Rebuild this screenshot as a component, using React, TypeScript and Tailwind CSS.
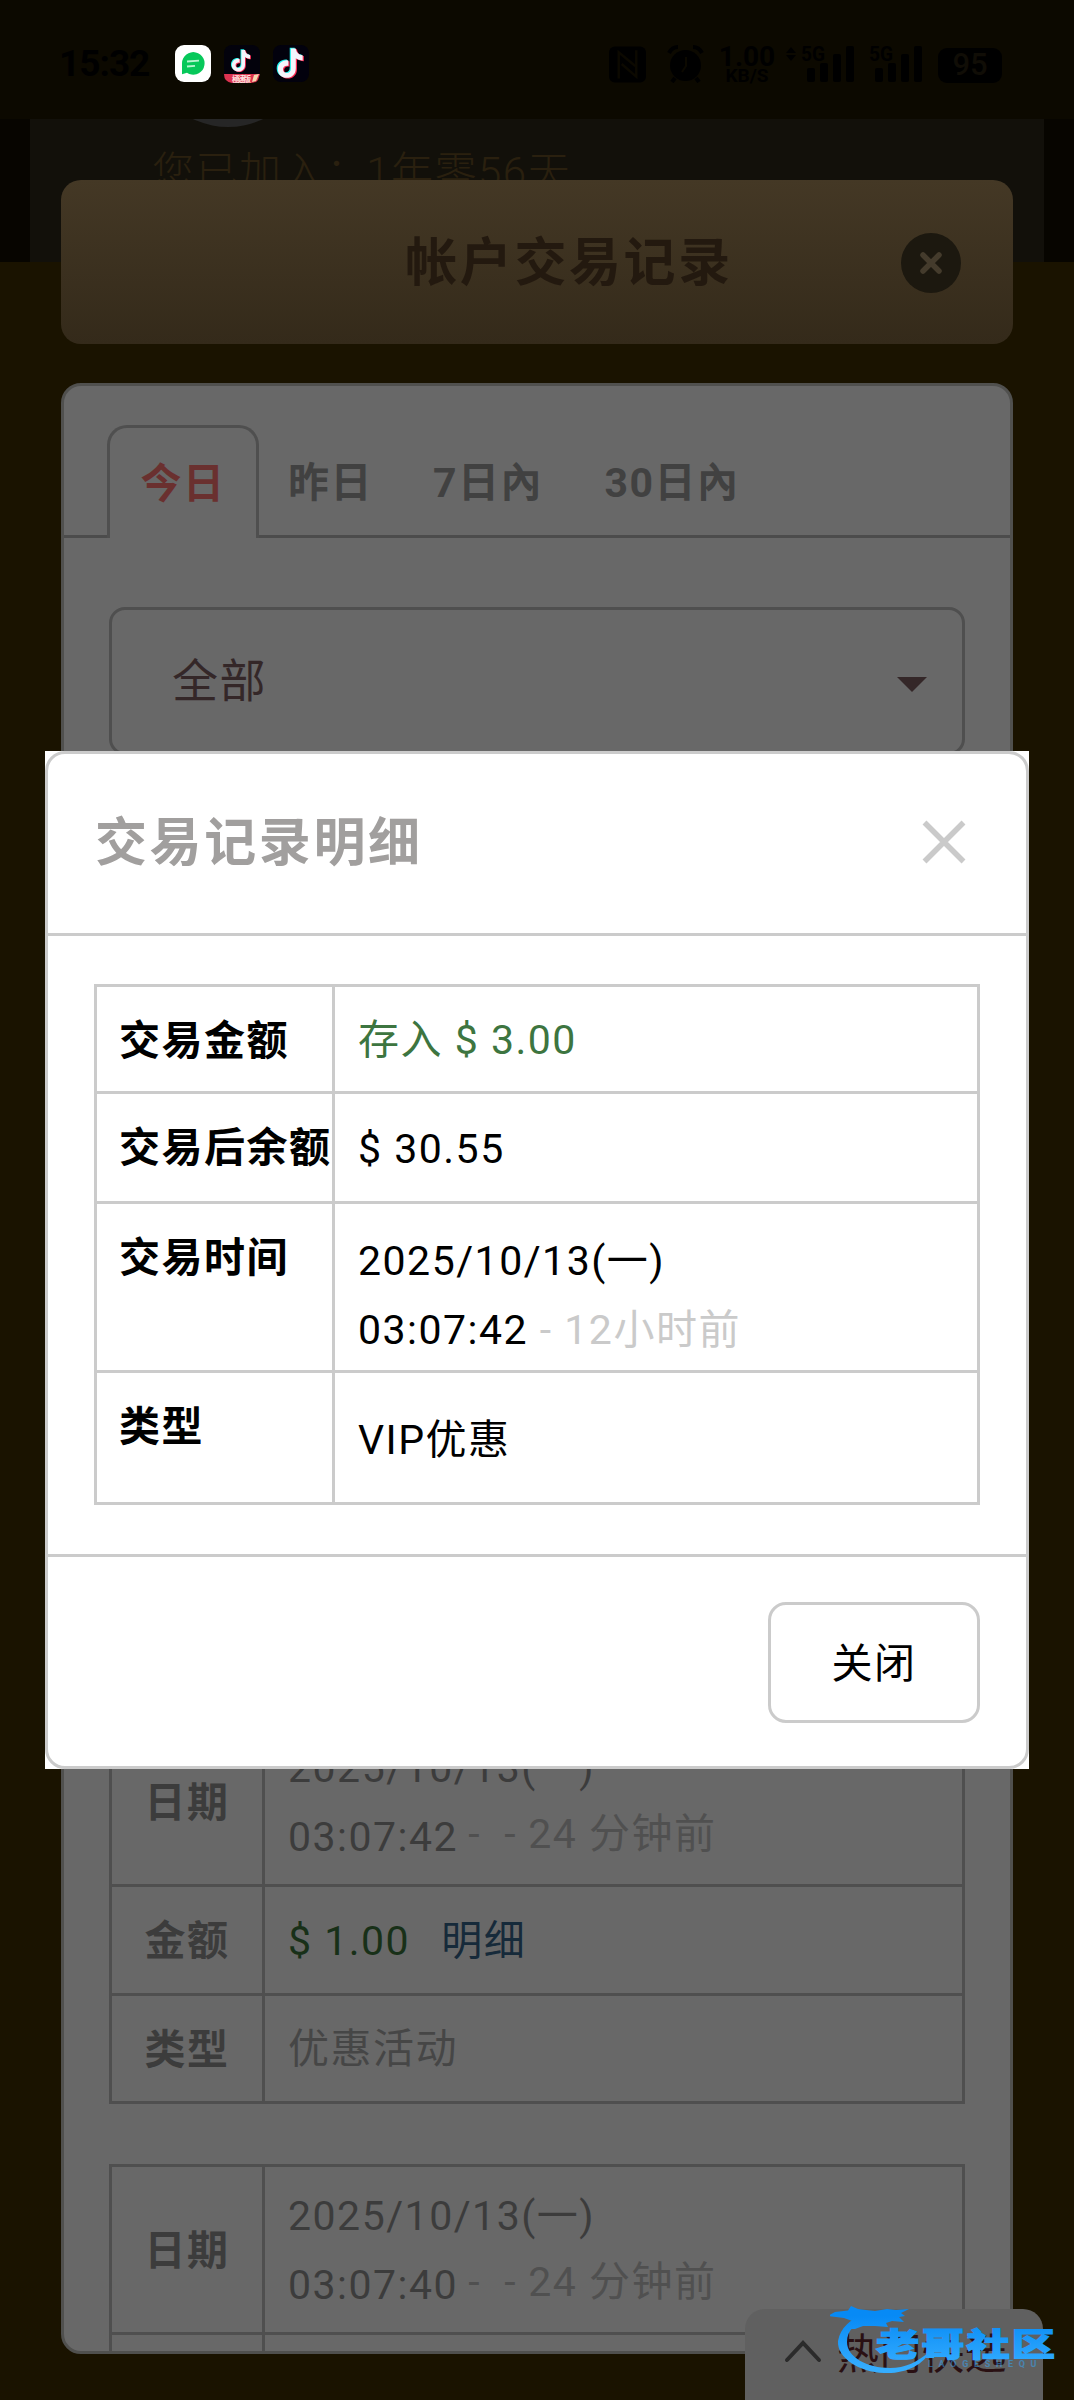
import { useState } from 'react';
import type { ReactNode } from 'react';
import clsx from 'clsx';

// ─── Data ────────────────────────────────────────────────────────────────────

const TABS = [
  { id: 'today', label: '今日', width: 'w-[152px]' },
  { id: 'yesterday', label: '昨日', width: 'w-[143px]' },
  { id: 'week', label: '7日內', width: 'w-[172px]' },
  { id: 'month', label: '30日內', width: 'w-[196px]' },
];

interface TransactionRecord {
  date: string;
  time: string;
  ago: string;
  amount: string;
  type: string;
}

const RECORDS: TransactionRecord[] = [
  { date: '2025/10/13(一)', time: '03:07:42', ago: '24 分钟前', amount: '$ 1.00', type: '优惠活动' },
  { date: '2025/10/13(一)', time: '03:07:40', ago: '24 分钟前', amount: '', type: '' },
];

// ─── Status bar ──────────────────────────────────────────────────────────────

const NOTE_PATH =
  'M19.3 4h5c.5 4 3 6.600 7 7v5.200c-2.700 0-5-.8-7-2.200v10.500c0 6-4.300 9.500-9.300 9.500S6 30.200 6 25.200c0-5.700 4.800-9.700 10.700-8.900v5.500c-3-.8-5.500.9-5.500 3.500 0 2.200 1.700 3.800 3.900 3.800 2.500 0 4.200-1.700 4.200-4.600z';

function MusicNote() {
  return (
    <>
      <path d={NOTE_PATH} fill="#25f4ee" transform="translate(-1.200 -.8)" />
      <path d={NOTE_PATH} fill="#fe2c55" transform="translate(1.200 .8)" />
      <path d={NOTE_PATH} fill="#f4f4fb" />
    </>
  );
}

function Signal({ arrows }: { arrows?: boolean }) {
  return (
    <svg className="overflow-visible" width="68" height="38" viewBox="0 0 68 38">
      {arrows && <path d="M5 0l5 6H0zM5 14l5-6H0z" transform="translate(0 2)" />}
      <text x="15" y="15.500" fontSize="20" fontWeight="700" textLength="24" lengthAdjust="spacingAndGlyphs">
        5G
      </text>
      <rect x="21" y="23" width="8" height="14" rx="2" />
      <rect x="34" y="18" width="8" height="19" rx="2" />
      <rect x="47" y="9" width="8" height="28" rx="2" />
      <rect x="60" y="1" width="8" height="36" rx="2" />
    </svg>
  );
}

function StatusBar() {
  return (
    <header className="flex h-[119px] items-start bg-[#0c0900] pl-[59px] pt-[45px] text-black">
      <span className="w-[116px] text-[37px] leading-[38px] font-bold tracking-[-1px]">15:32</span>

      <svg width="36" height="37" viewBox="0 0 36 37">
        <rect width="36" height="37" rx="9" fill="#fff" />
        <path d="M7 18a11.300 11.300 0 1 1 5 9.800L7 29.300z" fill="#07c85a" />
        <path d="M12 16.500l12-.8M12 21.500l8-.7" stroke="#b7f5cf" strokeWidth="1.800" />
      </svg>
      <svg className="ml-[12px]" width="38" height="39" viewBox="0 0 38 39">
        <rect x="1" width="36" height="37" rx="8" fill="#03020c" />
        <g transform="translate(4.500 2) scale(.72)">
          <MusicNote />
        </g>
        <path d="M1 29h36l-2 6q-2 3-7 3H9Q1 37 1 29z" fill="#dc3350" />
        <path d="M31 30l5-1-3 7-4 1z" fill="#f7d9b0" />
        <text x="9" y="36.500" fontSize="7.500" fontWeight="700" fill="#ffe1df" textLength="19">
          極速版
        </text>
      </svg>
      <svg className="ml-[12px]" width="37" height="37" viewBox="0 0 37 37">
        <rect width="36" height="37" rx="8" fill="#02010d" />
        <g transform="translate(-1 -.5) scale(.98)">
          <MusicNote />
        </g>
      </svg>

      <div className="ml-[299px] flex items-start">
        {/* NFC */}
        <svg width="37" height="38" viewBox="0 0 38 38">
          <rect y="1" width="38" height="37" rx="6" />
          <path d="M10 34V7l17 14M28 5v27L13 19" fill="none" stroke="#0c0900" strokeWidth="2.500" />
        </svg>
        {/* Alarm */}
        <svg className="ml-[21px]" width="37" height="38" viewBox="0 0 37 38">
          <circle cx="18.500" cy="20.500" r="15.500" />
          <path d="M2 8q3-6 9-6M35 8q-3-6-9-6M8 33l-3 4M29 33l3 4" fill="none" stroke="#000" strokeWidth="4" />
          <path d="M19 12v9l-4 6" fill="none" stroke="#0c0900" strokeWidth="2" />
        </svg>
        <div className="ml-[14px] flex w-[58px] flex-col items-center font-bold">
          <span className="text-[28px] leading-[23px]">1.00</span>
          <span className="text-[19px] leading-[16px]">KB/S</span>
        </div>
        <div className="ml-[10px] flex">
          <Signal arrows />
          <Signal />
        </div>
        <div className="mt-[3px] ml-[16px] flex h-[35px] w-[64px] items-center justify-center rounded-[9px] bg-black text-[31px] font-medium text-[#100d06]">
          95
        </div>
      </div>
    </header>
  );
}

// ─── Record tables ───────────────────────────────────────────────────────────

function RecordRow({ label, height, children }: { label: string; height: string; children?: ReactNode }) {
  return (
    <div className={clsx('flex border-b-[3px] border-[#4f4f4f]', height)}>
      <div className="flex w-[153px] shrink-0 items-center justify-center border-r-[3px] border-[#4f4f4f] pt-[4px] font-bold text-[#3c3c3c]">
        {label}
      </div>
      <div className="flex flex-1 items-center pt-[3px] pl-[23px]">{children}</div>
    </div>
  );
}

function RecordTable({ record }: { record: TransactionRecord }) {
  return (
    <div className="shrink-0 border-x-[3px] border-t-[3px] border-[#4f4f4f] text-[#3c3c3c]">
      <RecordRow label="日期" height="h-[168px]">
        <div className="leading-[69px]">
          <div>{record.date}</div>
          <div className="flex">
            <span>{record.time}</span>
            <span className="-mt-[3px] whitespace-pre text-[#505050]">
              <span className="inline-block w-[35px] pl-[10px]">-</span>
              <span className="inline-block w-[25px] pl-[11px]">-</span>
              <span className="pl-[10px]">{record.ago}</span>
            </span>
          </div>
        </div>
      </RecordRow>
      <RecordRow label="金额" height="h-[109px]">
        <span className="text-[#183018]">{record.amount}</span>
        <a className="ml-[31px] text-[#162a3a]">明细</a>
      </RecordRow>
      <RecordRow label="类型" height="h-[108px]">
        <span className="text-[#464646]">{record.type}</span>
      </RecordRow>
    </div>
  );
}

// ─── Detail modal ────────────────────────────────────────────────────────────

function DetailRow({ label, height, children }: { label: string; height: string; children: ReactNode }) {
  return (
    <div className={clsx('flex border-b-[3px] border-[#cbcbcb]', height)}>
      <div className="w-[238px] shrink-0 border-r-[3px] border-[#cbcbcb] pl-[22px] leading-[109px] font-bold whitespace-nowrap">
        {label}
      </div>
      <div className="flex flex-1 items-center pt-[4px] pl-[23px]">{children}</div>
    </div>
  );
}

function DetailModal() {
  return (
    <section className="absolute top-[751px] left-[45px] h-[1018px] w-[984px] bg-white">
      <div className="h-full rounded-[20px] border-[3px] border-[#cbcbcb] text-black">
        <div className="flex h-[182px] items-center justify-between border-b-[3px] border-[#cbcbcb] pr-[60px] pl-[47px]">
          <h2 className="text-[52px] font-bold tracking-[2.6px] text-[#a19f9e]">交易记录明细</h2>
          <svg className="-mt-[4px]" width="44" height="44" viewBox="0 0 44 44">
            <path d="M2.500 2.500l39 39M41.500 2.500l-39 39" stroke="#cacaca" strokeWidth="5.500" />
          </svg>
        </div>

        <div className="px-[46px] pt-[48px]">
          <div className="border-x-[3px] border-t-[3px] border-[#cbcbcb]">
            <DetailRow label="交易金额" height="h-[107px]">
              <span className="text-[#3d7540]">存入 $ 3.00</span>
            </DetailRow>
            <DetailRow label="交易后余额" height="h-[110px]">
              $ 30.55
            </DetailRow>
            <DetailRow label="交易时间" height="h-[169px]">
              <div className="pt-[14px] leading-[69.500px]">
                <div>2025/10/13(一)</div>
                <div>
                  03:07:42 <span className="text-[#cacaca]">- 12小时前</span>
                </div>
              </div>
            </DetailRow>
            <DetailRow label="类型" height="h-[132px]">
              <span className="pt-[2px]">VIP优惠</span>
            </DetailRow>
          </div>
        </div>

        <div className="mt-[49px] flex justify-end border-t-[3px] border-[#cbcbcb] pt-[45px] pr-[46px]">
          <button className="h-[121px] w-[212px] rounded-[18px] border-[3px] border-[#cbcbcb] pt-[4px] tracking-[1.5px]">
            关闭
          </button>
        </div>
      </div>
    </section>
  );
}

// ─── Community watermark ─────────────────────────────────────────────────────

function Watermark() {
  return (
    <svg className="absolute top-[2300px] left-[830px]" width="234" height="80" viewBox="0 0 234 80">
      <defs>
        <linearGradient id="wm" x1="0" y1="0" x2="0" y2="80" gradientUnits="userSpaceOnUse">
          <stop offset="0.200" stopColor="#078af5" />
          <stop offset="0.850" stopColor="#35adff" />
        </linearGradient>
      </defs>
      <g fill="url(#wm)">
        <path d="M38 12Q11 22 8 41C7 58 29 72 54 73 77 74 94 64 100 51 88 62 75 68 60 68 37 68 17 57 17 42 17 30 25 22 43 17z" />
        <path d="M5 12l13-1.500L21 6l7 3 8 1 9 1 12-2 9 1 13-1-8 4 4 3-6 1 5 5-12-1-6 2 2 4-13-1-12 0-8 3-6 0 6-7-11-4-8-1-8-1z" />
        <text
          x="46"
          y="55.500"
          fontSize="32"
          fontWeight="900"
          stroke="url(#wm)"
          strokeWidth="1.200"
          textLength="181"
          lengthAdjust="spacingAndGlyphs"
        >
          老哥社区
        </text>
        <text x="98" y="67" fontSize="9" fontWeight="700" textLength="110" opacity="0.500">
          LAOGESHEQU
        </text>
      </g>
    </svg>
  );
}

// ─── Page ────────────────────────────────────────────────────────────────────

export default function App() {
  const [tab, setTab] = useState('today');

  return (
    <div className="relative h-[2400px] w-[1074px] overflow-hidden bg-[#1a1300] font-[Roboto,'Noto_Sans_CJK_SC',sans-serif] text-[41px] tracking-[1.5px]">
      <div className="h-[262px] bg-[#070500] tracking-normal">
        <StatusBar />
        <div className="relative mx-[30px] h-[143px] overflow-hidden bg-[#12100a] pt-[24px] pl-[122px]">
          <span className="absolute -top-[154px] left-[117px] size-[162px] rounded-full bg-[#262626]" />
          <p className="text-[42px] leading-[60px] font-light tracking-[1.5px] whitespace-nowrap text-[#2a200f]">
            您已加入：<span className="-ml-[15px]"> 1年零56天</span>
          </p>
        </div>
      </div>

      {/* Title bar */}
      <div className="relative mx-[61px] -mt-[82px] flex h-[164px] items-center justify-center rounded-[20px] bg-linear-to-b from-[#443825] to-[#342a1a]">
        <h1 className="pt-[4px] pl-[64px] text-[52px] font-bold tracking-[2.6px] text-[#23190f]">帐户交易记录</h1>
        <button className="absolute top-[53px] right-[52px] flex size-[60px] items-center justify-center rounded-full bg-[#1c180f]">
          <svg width="24" height="24" viewBox="0 0 24 24">
            <path d="M4 4l16 16M20 4L4 20" stroke="#443b2c" strokeWidth="5.500" strokeLinecap="round" />
          </svg>
        </button>
      </div>

      {/* Records panel */}
      <main className="mx-[61px] mt-[39px] flex h-[1971px] flex-col overflow-hidden rounded-[20px] border-[3px] border-[#50504e] bg-[#686868]">
        <nav className="flex h-[152px] shrink-0 items-end">
          <div className="w-[43px] border-b-[3px] border-[#4c4c4c]" />
          {TABS.map(t => (
            <button
              key={t.id}
              onClick={() => setTab(t.id)}
              className={clsx(
                'h-[113px] font-bold',
                t.width,
                t.id === tab
                  ? 'rounded-t-[20px] border-x-[3px] border-t-[3px] border-[#4f4f4f] pt-[3px] text-[#6a302f]'
                  : 'border-b-[3px] border-[#4c4c4c] pt-[8px] text-[#414141]'
              )}
            >
              {t.label}
            </button>
          ))}
          <div className="flex-1 border-b-[3px] border-[#4c4c4c]" />
        </nav>

        <div className="flex flex-col px-[45px] pt-[69px]">
          <div className="flex h-[148px] shrink-0 items-center justify-between rounded-[16px] border-[3px] border-[#4f4f4f] pr-[35px] pl-[60px] text-[46px] text-[#342728]">
            <span className="pt-px">全部</span>
            <svg className="mt-[7px]" width="30" height="15" viewBox="0 0 30 15">
              <path d="M0 0h30L15 15z" fill="#342728" />
            </svg>
          </div>

          <div className="mt-[961px] flex flex-col gap-[60px]">
            {RECORDS.map(r => (
              <RecordTable key={r.time} record={r} />
            ))}
          </div>
        </div>
      </main>

      {/* Quick picks */}
      <div className="absolute top-[2309px] left-[745px] flex h-[91px] w-[298px] items-center rounded-t-[20px] bg-[#606060] pl-[39px] text-[42px] tracking-[.5px] text-[#2a1013]">
        <svg className="mr-[15px] -mt-[8px]" width="38" height="24" viewBox="0 0 38 24">
          <path d="M3 21L19 4l16 17" fill="none" stroke="#2b2b2b" strokeWidth="4" strokeLinecap="round" />
        </svg>
        热门快选
      </div>

      <DetailModal />
      <Watermark />
    </div>
  );
}
